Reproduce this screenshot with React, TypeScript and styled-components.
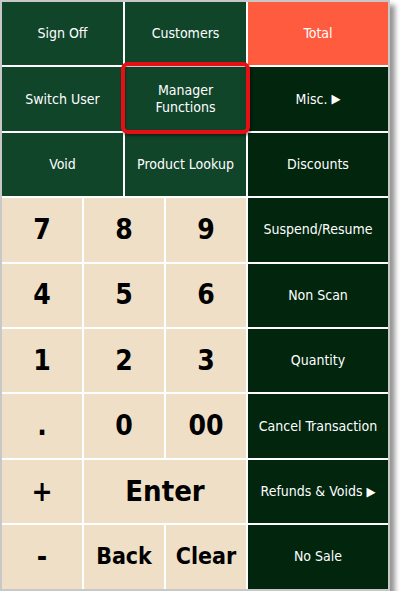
import React from "react";
import styled, { createGlobalStyle, css } from "styled-components";

type Tone = "green" | "dark" | "total" | "num";

const GlobalStyle = createGlobalStyle`
  body {
    margin: 0;
    background: #ffffff;
    font-family: "DejaVu Sans Condensed", "DejaVu Sans", sans-serif;
  }
`;

const Frame = styled.div`
  width: 386px;
  border: 2px solid #c8c8c8;
  background: #ffffff;
  box-shadow: 5px 5px 5px rgba(0, 0, 0, 0.42);
`;

const Pad = styled.div`
  display: grid;
  grid-template-columns: repeat(6, 1fr) 140px;
  grid-auto-rows: 63.4px;
  gap: 2px;
`;

const tones = {
  green: css`
    background: #11452a;
    color: #ffffff;
    font-size: 14px;
  `,
  dark: css`
    background: #01250d;
    color: #ffffff;
    font-size: 14px;
  `,
  total: css`
    background: #ff5b3e;
    color: #ffffff;
    font-size: 14px;
  `,
  num: css`
    background: #efdfc6;
    color: #000000;
    font-weight: bold;
    font-size: 28px;
  `,
};

const Key = styled.button<{ $tone: Tone; $span: number; $size?: number }>`
  position: relative;
  grid-column: span ${(p) => p.$span};
  display: flex;
  align-items: center;
  justify-content: center;
  border: 0;
  padding: 0 4px;
  margin: 0;
  font-family: inherit;
  line-height: 1.2;
  text-align: center;
  cursor: pointer;
  ${(p) => tones[p.$tone]}
  ${(p) => p.$size && `font-size: ${p.$size}px;`}
`;

const Arrow = styled.span`
  font-size: 13px;
  margin-left: 4px;
`;

const Highlight = styled.span`
  position: absolute;
  top: -5px;
  bottom: -3px;
  left: -4px;
  right: -4px;
  border: 4px solid #e50f14;
  border-radius: 7px;
  box-shadow: 1px 2px 3px rgba(0, 0, 0, 0.45), inset 1px 1px 2px rgba(0, 0, 0, 0.3);
  pointer-events: none;
  z-index: 1;
`;

const rightKeys = [
  "Suspend/Resume",
  "Non Scan",
  "Quantity",
  "Cancel Transaction",
];

const digitRows = [
  ["7", "8", "9"],
  ["4", "5", "6"],
  ["1", "2", "3"],
  [".", "0", "00"],
];

export default function App() {
  return (
    <>
      <GlobalStyle />
      <Frame>
        <Pad>
          <Key $tone="green" $span={3}>Sign Off</Key>
          <Key $tone="green" $span={3}>Customers</Key>
          <Key $tone="total" $span={1}>Total</Key>

          <Key $tone="green" $span={3}>Switch User</Key>
          <Key $tone="green" $span={3}>
            Manager
            <br />
            Functions
            <Highlight />
          </Key>
          <Key $tone="dark" $span={1}>
            Misc.<Arrow>▶</Arrow>
          </Key>

          <Key $tone="green" $span={3}>Void</Key>
          <Key $tone="green" $span={3}>Product Lookup</Key>
          <Key $tone="dark" $span={1}>Discounts</Key>

          {digitRows.map((row, i) => (
            <React.Fragment key={i}>
              {row.map((d) => (
                <Key key={d} $tone="num" $span={2}>
                  {d}
                </Key>
              ))}
              <Key $tone="dark" $span={1}>{rightKeys[i]}</Key>
            </React.Fragment>
          ))}

          <Key $tone="num" $span={2}>+</Key>
          <Key $tone="num" $span={4} $size={29}>Enter</Key>
          <Key $tone="dark" $span={1}>
            Refunds &amp; Voids<Arrow>▶</Arrow>
          </Key>

          <Key $tone="num" $span={2}>-</Key>
          <Key $tone="num" $span={2} $size={23}>Back</Key>
          <Key $tone="num" $span={2} $size={23}>Clear</Key>
          <Key $tone="dark" $span={1}>No Sale</Key>
        </Pad>
      </Frame>
    </>
  );
}
